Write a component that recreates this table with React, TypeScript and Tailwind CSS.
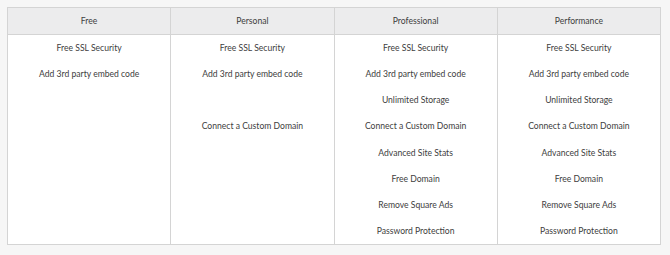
import React from 'react';

const plans = ['Free', 'Personal', 'Professional', 'Performance'];

const rows: (string | null)[][] = [
  ['Free SSL Security', 'Free SSL Security', 'Free SSL Security', 'Free SSL Security'],
  ['Add 3rd party embed code', 'Add 3rd party embed code', 'Add 3rd party embed code', 'Add 3rd party embed code'],
  [null, null, 'Unlimited Storage', 'Unlimited Storage'],
  [null, 'Connect a Custom Domain', 'Connect a Custom Domain', 'Connect a Custom Domain'],
  [null, null, 'Advanced Site Stats', 'Advanced Site Stats'],
  [null, null, 'Free Domain', 'Free Domain'],
  [null, null, 'Remove Square Ads', 'Remove Square Ads'],
  [null, null, 'Password Protection', 'Password Protection'],
];

export default function App() {
  return (
    <div className="w-[670px] h-[255px] bg-[#f6f6f6] pt-[7px] pl-[7px] font-['Lato',sans-serif] text-[8.6px] text-[#404040]">
      <table className="w-[654px] table-fixed border-collapse bg-white border border-[#d4d4d4]">
        <thead>
          <tr className="bg-[#ececed]">
            {plans.map((p) => (
              <th key={p} className="h-[27px] border border-[#d4d4d4] font-normal text-center p-0">
                {p}
              </th>
            ))}
          </tr>
        </thead>
        <tbody>
          {rows.map((row, i) => (
            <tr key={i}>
              {row.map((cell, j) => (
                <td key={j} className="h-[26.25px] border-x border-[#d4d4d4] text-center p-0 pt-px">
                  {cell}
                </td>
              ))}
            </tr>
          ))}
        </tbody>
      </table>
    </div>
  );
}
